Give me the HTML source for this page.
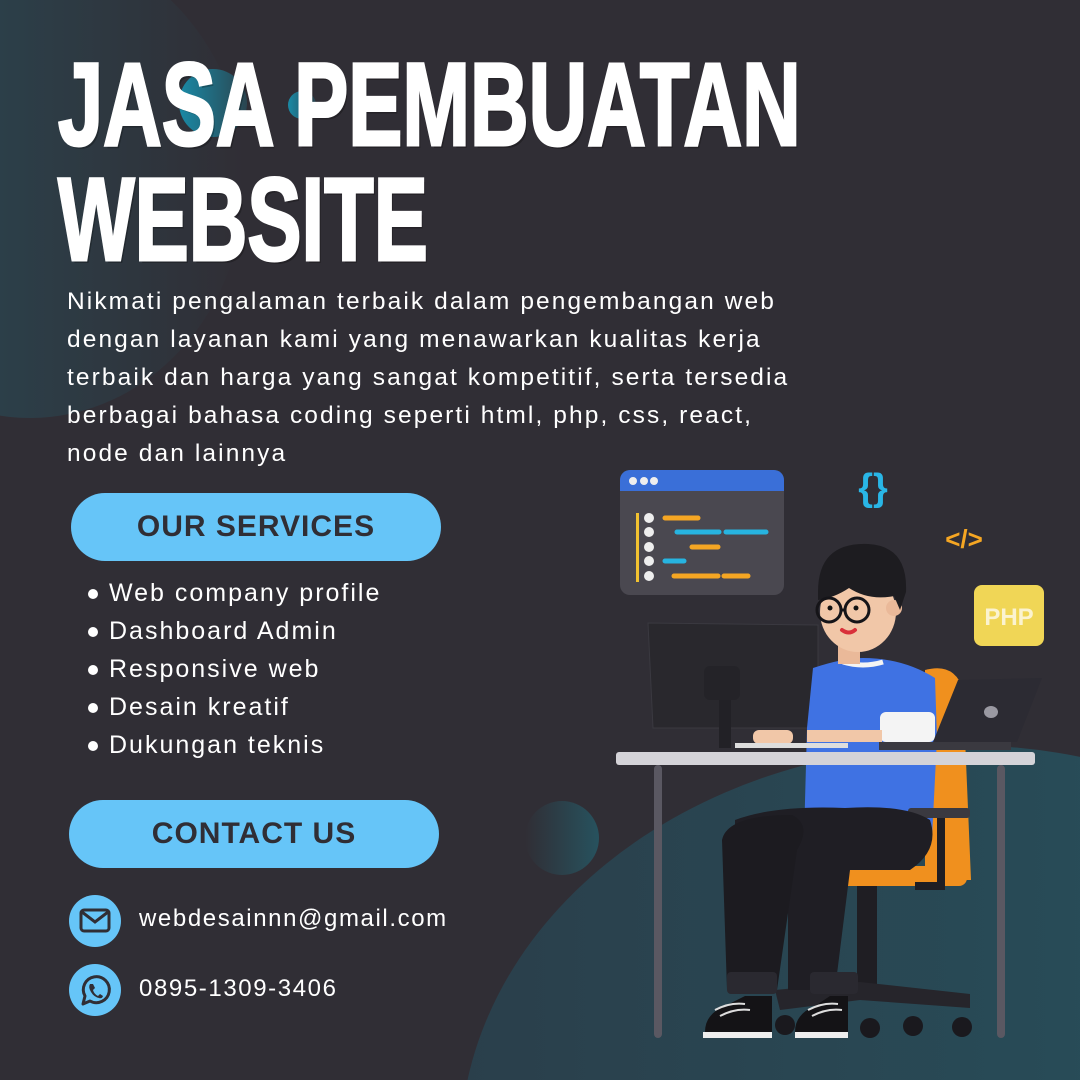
<!DOCTYPE html>
<html><head><meta charset="utf-8"><style>
*{margin:0;padding:0;box-sizing:border-box}
html,body{width:1080px;height:1080px;overflow:hidden}
body{background:#302e35;position:relative;font-family:"Liberation Sans",sans-serif;color:#fff}
.abs{position:absolute}
.title{position:absolute;left:58px;font-weight:bold;font-size:118px;line-height:1;white-space:nowrap;letter-spacing:0;-webkit-text-stroke:3px #fff;text-shadow:3px 3px 0 rgba(0,0,0,.25);transform:scaleX(0.688);transform-origin:left top}
.p{position:absolute;left:67px;top:283px;font-size:24.5px;line-height:38px;letter-spacing:2.1px;white-space:nowrap}
.pill{position:absolute;background:#66c5f8;border-radius:34px;color:#302e35;font-weight:bold;font-size:30px;text-align:center;line-height:68px;width:370px;height:68px;letter-spacing:1px}
ul{position:absolute;left:88px;top:574px;list-style:none}
li{font-size:25px;line-height:38px;letter-spacing:2px;padding-left:21px;position:relative;white-space:nowrap}
li:before{content:"";position:absolute;left:0;top:15px;width:10px;height:10px;border-radius:50%;background:#fff}
.ic{position:absolute;left:69px;width:52px;height:52px;border-radius:50%;background:#66c5f8}
.ct{position:absolute;left:139px;font-size:24px;letter-spacing:1.6px;white-space:nowrap}
</style></head><body>
<svg class="abs" style="left:0;top:0" width="1080" height="1080">
<defs>
<linearGradient id="g1" x1="0" x2="1"><stop offset="0" stop-color="#294c58"/><stop offset="1" stop-color="#302e35"/></linearGradient>
<linearGradient id="g2" x1="0" x2="1"><stop offset="0" stop-color="#2a3f4b"/><stop offset="1" stop-color="#27535f"/></linearGradient>
<linearGradient id="g3" x1="0" x2="1"><stop offset="0" stop-color="#302e35"/><stop offset="1" stop-color="#27525e"/></linearGradient>
<linearGradient id="g4" x1="0" x2="1"><stop offset="0" stop-color="#1a8aa6"/><stop offset="1" stop-color="#2a4550"/></linearGradient>
</defs>
<ellipse cx="30" cy="180" rx="215" ry="238" fill="url(#g1)"/>
<ellipse cx="960" cy="1150" rx="500" ry="405" fill="url(#g2)"/>
<circle cx="562" cy="838" r="37" fill="url(#g3)"/>
<circle cx="213" cy="103" r="34" fill="url(#g4)"/>
<circle cx="302" cy="105" r="14" fill="url(#g4)"/>

<rect x="620" y="470" width="164" height="125" rx="10" fill="#4a4850"/>
<path d="M630 470h144a10 10 0 0 1 10 10v11h-164v-11a10 10 0 0 1 10-10z" fill="#3a6fd8"/>
<g fill="#eee"><circle cx="633" cy="481" r="4"/><circle cx="644" cy="481" r="4"/><circle cx="654" cy="481" r="4"/>
<circle cx="649" cy="518" r="5"/><circle cx="649" cy="532" r="5"/><circle cx="649" cy="547" r="5"/><circle cx="649" cy="561" r="5"/><circle cx="649" cy="576" r="5"/></g>
<rect x="636" y="513" width="3" height="69" fill="#f2c230"/>
<g stroke-width="5" stroke-linecap="round">
<path d="M665 518h33M724 576h24M692 547h26" stroke="#f5a623"/>
<path d="M677 532h42M726 532h40M665 561h19" stroke="#27b4e0"/>
<path d="M674 576h44" stroke="#f5a623"/></g>
<text x="873" y="500" font-family="Liberation Sans" font-weight="bold" font-size="38" fill="#29b6e6" text-anchor="middle">{}</text>
<text x="964" y="548" font-family="Liberation Sans" font-weight="bold" font-size="26" fill="#f5a623" text-anchor="middle">&lt;/&gt;</text>
<rect x="974" y="585" width="70" height="61" rx="8" fill="#f0d656"/>
<text x="1009" y="625" font-family="Liberation Sans" font-weight="bold" font-size="24" fill="#fbf3d0" text-anchor="middle">PHP</text>

<path d="M925 670q30-8 38 20l8 190h-46z" fill="#f0901e"/>
<path d="M648 623l170 2v103h-165z" fill="#29282d" stroke="#3a3940" stroke-width="1"/>
<rect x="704" y="666" width="36" height="34" rx="6" fill="#242328"/>
<rect x="719" y="700" width="12" height="48" fill="#222126"/>
<path d="M813 668q30-10 50-10 40 0 72 20l2 60-5 100h-128l3-110z" fill="#3f72e3"/>
<path d="M843 662q20 6 40 0" stroke="#f4f4f4" stroke-width="5" fill="none"/>
<rect x="880" y="712" width="55" height="30" rx="6" fill="#f4f4f4"/>
<path d="M807 730h75v12h-75z" fill="#f1c7a8"/>
<rect x="753" y="730" width="40" height="14" rx="6" fill="#f1c7a8"/>
<rect x="838" y="640" width="22" height="24" fill="#eab999"/>
<ellipse cx="858" cy="612" rx="38" ry="40" fill="#f1c7a8"/>
<circle cx="894" cy="608" r="8" fill="#eab999"/>
<path d="M818 592q0-50 50-48 40 2 38 48l-6 18-6-14q-25 5-45-8-15 10-31 12z" fill="#1d1c20"/>
<circle cx="829" cy="610" r="12" fill="none" stroke="#151418" stroke-width="3"/>
<circle cx="857" cy="610" r="12" fill="none" stroke="#151418" stroke-width="3"/>
<path d="M841 610h4" stroke="#151418" stroke-width="3"/>
<circle cx="830" cy="608" r="2.5" fill="#111"/><circle cx="856" cy="608" r="2.5" fill="#111"/>
<path d="M842 630q7 5 13 0" stroke="#d9303a" stroke-width="4" fill="none" stroke-linecap="round"/>
<path d="M933 742l25-62 84-2-25 64z" fill="#2c2b33"/>
<ellipse cx="991" cy="712" rx="7" ry="6" fill="#9a99a2"/>
<rect x="879" y="742" width="132" height="8" fill="#3a3940"/>
<rect x="735" y="743" width="113" height="5" fill="#ddd"/>
<rect x="616" y="752" width="419" height="13" rx="3" fill="#d4d3d8"/>
<rect x="654" y="765" width="8" height="273" rx="4" fill="#5a5862"/>
<rect x="997" y="765" width="8" height="273" rx="4" fill="#5a5862"/>
<rect x="857" y="886" width="20" height="104" fill="#1f1e23"/>
<path d="M775 990l85-8 110 12v14l-110-8-80 10z" fill="#26252b"/>
<g fill="#1a191e"><circle cx="785" cy="1025" r="10"/><circle cx="870" cy="1028" r="10"/><circle cx="913" cy="1026" r="10"/><circle cx="962" cy="1027" r="10"/></g>
<rect x="773" y="866" width="194" height="20" rx="8" fill="#f0901e"/>
<rect x="908" y="808" width="62" height="10" rx="3" fill="#3a3940"/>
<path d="M937 818h8v72h-30v-8h22z" fill="#1f1e23"/>
<path d="M735 820q40-15 110-12 60-4 85 12 10 30-20 50h-60l-15 120h-47v-115q-40 5-53-15z" fill="#1f1e24"/>
<path d="M722 840q5-25 70-25 20 10 5 35l-20 140h-50z" fill="#1c1b20"/>
<rect x="727" y="972" width="50" height="22" rx="4" fill="#2a2930"/>
<rect x="810" y="972" width="48" height="22" rx="4" fill="#2a2930"/>
<path d="M705 1032q0-18 20-26l20-10h27v36z" fill="#141316"/>
<path d="M795 1032q0-18 20-26l15-10h18v36z" fill="#141316"/>
<rect x="703" y="1032" width="69" height="6" fill="#eee"/>
<rect x="795" y="1032" width="53" height="6" fill="#eee"/>
<path d="M715 1010q15-8 30-6M720 1016q15-8 30-6M808 1010q15-8 30-6M812 1016q15-8 30-6" stroke="#ddd" stroke-width="2" fill="none"/>
</svg>

<div class="title" style="top:46px">JASA PEMBUATAN</div>
<div class="title" style="top:161px">WEBSITE</div>
<div class="p">Nikmati pengalaman terbaik dalam pengembangan web<br>dengan layanan kami yang menawarkan kualitas kerja<br>terbaik dan harga yang sangat kompetitif, serta tersedia<br>berbagai bahasa coding seperti html, php, css, react,<br>node dan lainnya</div>
<div class="pill" style="left:71px;top:493px">OUR SERVICES</div>
<ul><li>Web company profile</li><li>Dashboard Admin</li><li>Responsive web</li><li>Desain kreatif</li><li>Dukungan teknis</li></ul>
<div class="pill" style="left:69px;top:800px">CONTACT US</div>
<div class="ic" style="top:895px"><svg width="52" height="52"><rect x="12" y="15" width="28" height="21" rx="3" fill="none" stroke="#302e35" stroke-width="3"/><path d="M13 17l13 10 13-10" fill="none" stroke="#302e35" stroke-width="3"/></svg></div>
<div class="ic" style="top:964px"><svg width="52" height="52"><path d="M14 40l2-8a13 13 0 1 1 5 5z" fill="none" stroke="#302e35" stroke-width="3" stroke-linejoin="round"/><path d="M21 20q-2 3 1 8t8 6q3 1 4-2l-3-2-2 2q-4-2-5-6l2-2-2-4z" fill="#302e35"/></svg></div>
<div class="ct" style="top:905px">webdesainnn@gmail.com</div>
<div class="ct" style="top:975px">0895-1309-3406</div>
</body></html>
